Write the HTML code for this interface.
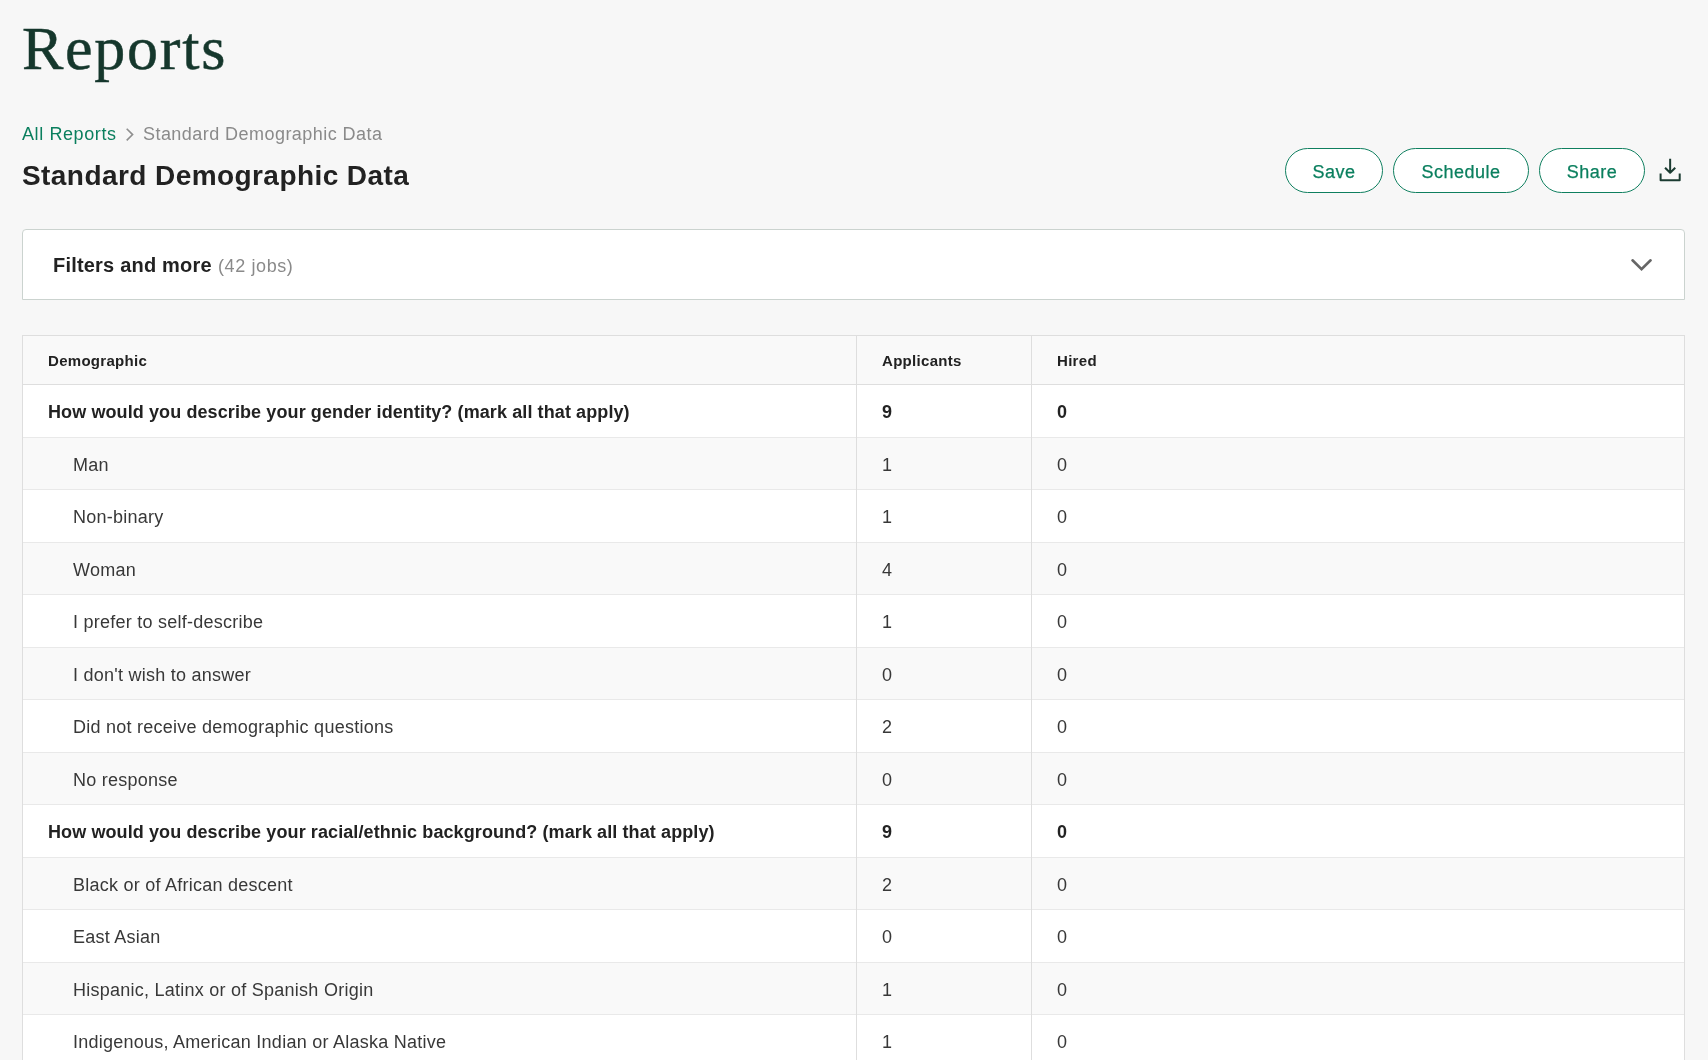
<!DOCTYPE html>
<html><head><meta charset="utf-8"><title>Reports</title>
<style>
*{box-sizing:border-box;margin:0;padding:0}
html,body{-webkit-font-smoothing:antialiased;width:1708px;height:1060px;overflow:hidden;background:#f7f7f7;font-family:"Liberation Sans",sans-serif;color:#222}
#wrap{position:absolute;left:0;top:0;width:1708px;height:1060px;will-change:transform;overflow:hidden}
.abs{position:absolute;white-space:nowrap}
#h1{left:22px;top:13px;font-family:"Liberation Serif",serif;font-size:62px;line-height:70px;color:#15372c;letter-spacing:1.75px;-webkit-text-stroke:0.5px #15372c}
#crumb1{left:22px;top:123px;font-size:18px;line-height:22px;color:#0a7f5e;letter-spacing:0.6px}
#crumb2{left:143px;top:123px;font-size:18px;line-height:22px;color:#8a8a8a;letter-spacing:0.45px}
#title{left:22px;top:159px;font-size:28px;line-height:34px;font-weight:700;color:#222;letter-spacing:0.43px}
.btn{position:absolute;top:148px;height:45px;border:1px solid #0f7f5f;border-radius:23px;background:#fff;color:#0a7f5e;font-size:18px;line-height:47px;text-align:center;letter-spacing:0.5px;-webkit-text-stroke:0.25px #0a7f5e}
#filters{position:absolute;left:22px;top:229px;width:1663px;height:71px;border:1px solid #cbd3cf;border-radius:4px 4px 0 0;background:#fff}
#ftitle{left:30px;top:23px;font-size:20px;line-height:24px;font-weight:700;color:#222;letter-spacing:0.2px}
#fjobs{left:195px;top:24px;font-size:18px;line-height:24px;color:#8a8a8a;letter-spacing:0.6px}
#table{position:absolute;left:22px;top:335px;width:1663px;height:760px;border:1px solid #dedede;border-bottom:none;background:#fff;overflow:hidden}
.head{position:absolute;left:0;top:0;width:100%;height:49px;background:#f9f9f9;border-bottom:1px solid #dedede}
.head div{position:absolute;top:0;line-height:49px;font-size:15px;font-weight:700;color:#222;letter-spacing:0.3px}
.row{position:absolute;left:0;width:100%}
.hline{position:absolute;left:0;width:100%;height:1px;background:#e9e9e9}
.row div{position:absolute;top:0;line-height:54px;font-size:18px;white-space:nowrap}
.c1{left:25px}
.sub .c1{left:50px}
.c2{left:859px}
.c3{left:1034px}
.q div{font-weight:700;color:#222;letter-spacing:0.1px}
.sub div{color:#383838;letter-spacing:0.25px}
.vline{position:absolute;top:0;width:1px;height:760px;background:#dedede}
</style></head><body><div id="wrap">
<div id="h1" class="abs">Reports</div>
<div id="crumb1" class="abs">All Reports</div>
<svg class="abs" style="left:125px;top:127px" width="10" height="15" viewBox="0 0 10 15"><path d="M1.7 1.8 L7.6 7.6 L1.7 13.4" fill="none" stroke="#8f8f8f" stroke-width="1.6"/></svg>
<div id="crumb2" class="abs">Standard Demographic Data</div>
<div id="title" class="abs">Standard Demographic Data</div>
<div class="btn" style="left:1285px;width:98px">Save</div>
<div class="btn" style="left:1393px;width:136px">Schedule</div>
<div class="btn" style="left:1539px;width:106px">Share</div>
<svg class="abs" style="left:1658px;top:156px" width="26" height="28" viewBox="0 0 26 28"><path d="M12.15 2.8 V16.8 M7.05 11.7 L12.15 16.8 L17.25 11.7 M2.6 17.5 V24.3 H21.7 V17.5" fill="none" stroke="#1b3b31" stroke-width="2" stroke-linejoin="round"/></svg>
<div id="filters">
 <div id="ftitle" class="abs">Filters and more</div>
 <div id="fjobs" class="abs">(42 jobs)</div>
 <svg class="abs" style="left:1606px;top:26px" width="30" height="20" viewBox="0 0 30 20"><path d="M3.5 4.3 L12.55 13.1 L21.6 4.3" fill="none" stroke="#666" stroke-width="2.6" stroke-linecap="round"/></svg>
</div>
<div id="table">
 <div class="head"><div class="c1">Demographic</div><div class="c2">Applicants</div><div class="c3">Hired</div></div>
<div class="row q" style="top:49px;height:52px;background:#ffffff"><div class="c1">How would you describe your gender identity? (mark all that apply)</div><div class="c2">9</div><div class="c3">0</div></div><div class="hline" style="top:101px"></div>
<div class="row sub" style="top:102px;height:51px;background:#f9f9f9"><div class="c1">Man</div><div class="c2">1</div><div class="c3">0</div></div><div class="hline" style="top:153px"></div>
<div class="row sub" style="top:154px;height:52px;background:#ffffff"><div class="c1">Non-binary</div><div class="c2">1</div><div class="c3">0</div></div><div class="hline" style="top:206px"></div>
<div class="row sub" style="top:207px;height:51px;background:#f9f9f9"><div class="c1">Woman</div><div class="c2">4</div><div class="c3">0</div></div><div class="hline" style="top:258px"></div>
<div class="row sub" style="top:259px;height:52px;background:#ffffff"><div class="c1">I prefer to self-describe</div><div class="c2">1</div><div class="c3">0</div></div><div class="hline" style="top:311px"></div>
<div class="row sub" style="top:312px;height:51px;background:#f9f9f9"><div class="c1">I don't wish to answer</div><div class="c2">0</div><div class="c3">0</div></div><div class="hline" style="top:363px"></div>
<div class="row sub" style="top:364px;height:52px;background:#ffffff"><div class="c1">Did not receive demographic questions</div><div class="c2">2</div><div class="c3">0</div></div><div class="hline" style="top:416px"></div>
<div class="row sub" style="top:417px;height:51px;background:#f9f9f9"><div class="c1">No response</div><div class="c2">0</div><div class="c3">0</div></div><div class="hline" style="top:468px"></div>
<div class="row q" style="top:469px;height:52px;background:#ffffff"><div class="c1">How would you describe your racial/ethnic background? (mark all that apply)</div><div class="c2">9</div><div class="c3">0</div></div><div class="hline" style="top:521px"></div>
<div class="row sub" style="top:522px;height:51px;background:#f9f9f9"><div class="c1">Black or of African descent</div><div class="c2">2</div><div class="c3">0</div></div><div class="hline" style="top:573px"></div>
<div class="row sub" style="top:574px;height:52px;background:#ffffff"><div class="c1">East Asian</div><div class="c2">0</div><div class="c3">0</div></div><div class="hline" style="top:626px"></div>
<div class="row sub" style="top:627px;height:51px;background:#f9f9f9"><div class="c1">Hispanic, Latinx or of Spanish Origin</div><div class="c2">1</div><div class="c3">0</div></div><div class="hline" style="top:678px"></div>
<div class="row sub" style="top:679px;height:52px;background:#ffffff"><div class="c1">Indigenous, American Indian or Alaska Native</div><div class="c2">1</div><div class="c3">0</div></div><div class="hline" style="top:731px"></div>
<div class="row sub" style="top:732px;height:51px;background:#f9f9f9"><div class="c1">Middle Eastern or North African</div><div class="c2">0</div><div class="c3">0</div></div><div class="hline" style="top:783px"></div>
 <div class="vline" style="left:833px"></div>
 <div class="vline" style="left:1008px"></div>
</div>
</div></body></html>
